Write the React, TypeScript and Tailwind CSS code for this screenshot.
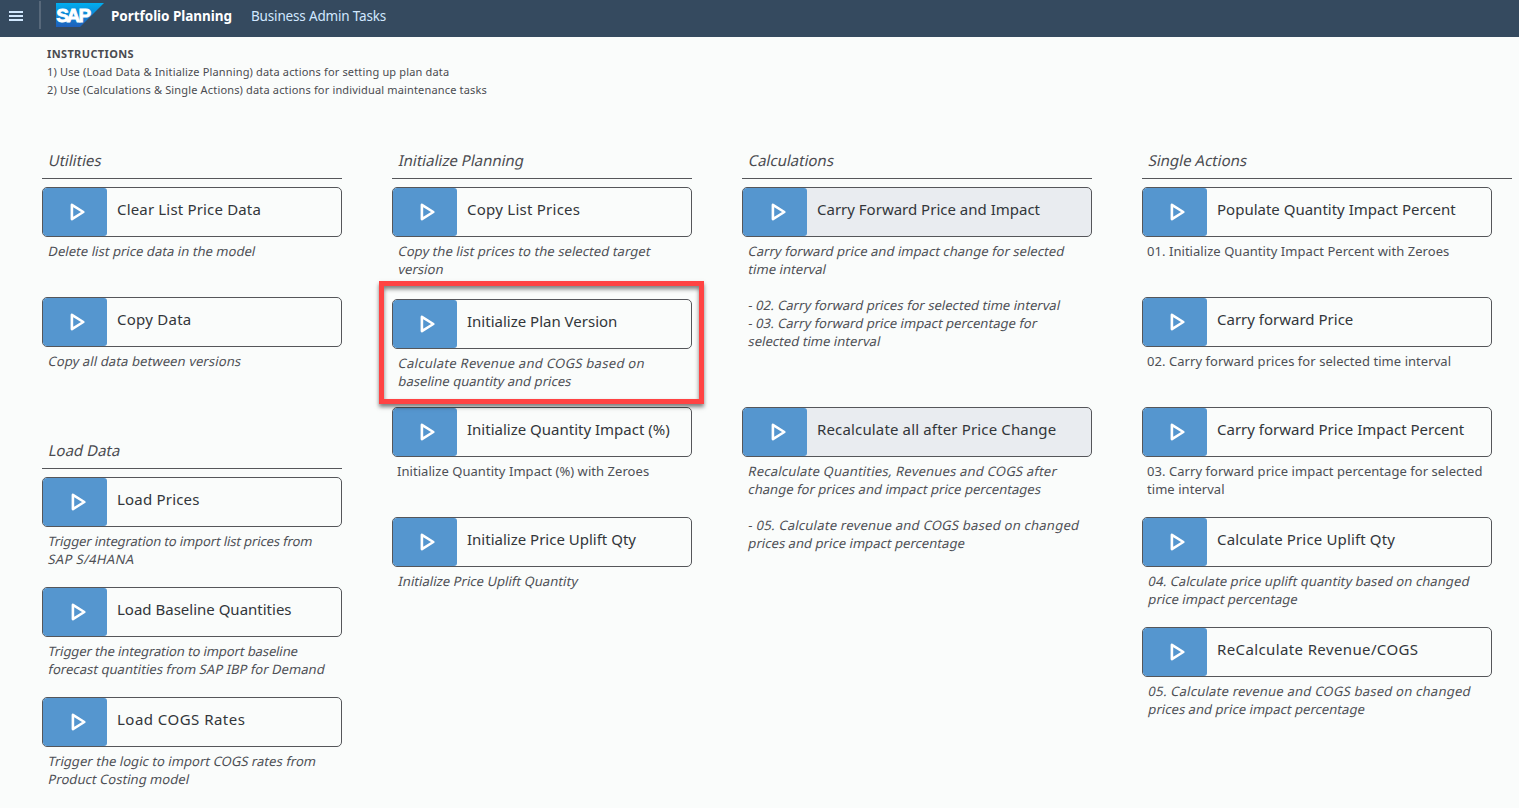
import React from "react";

type Line = string | { text: string; tracking: string };

type Item = {
  title: string;
  tracking?: string;
  lines: Line[];
  height: string;
  plain?: boolean;
  shaded?: boolean;
  highlight?: boolean;
};

function PlayIcon({ shifted }: { shifted?: boolean }) {
  return (
    <svg viewBox="0 0 18 20" className={`h-5 w-[18px] ${shifted ? "ml-[7px]" : "ml-[5px]"}`}>
      <path d="M2.9 2.9 L14.3 10 L2.9 17.1 Z" fill="none" stroke="#fff" strokeWidth="2.6" strokeLinejoin="round" />
    </svg>
  );
}

function Action({ item, shifted }: { item: Item; shifted?: boolean }) {
  return (
    <div className={`relative shrink-0 ${item.height}`}>
      <button
        className={`flex h-[50px] w-full overflow-hidden rounded-[5px] border border-[#55565a] text-left ${
          item.shaded ? "bg-[#e9ecf0]" : "bg-[#fafcfb]"
        }`}
      >
        <span className="flex h-full w-16 shrink-0 items-center justify-center rounded-[3px] bg-[#5596cf]">
          <PlayIcon shifted={shifted || item.shaded} />
        </span>
        <span
          className={`ml-[10px] mt-[11px] whitespace-nowrap text-[15px] leading-5 text-[#32363a] ${item.tracking ?? ""}`}
        >
          {item.title}
        </span>
      </button>
      <div className="mt-[5px] whitespace-nowrap pl-[5px] text-[13px] leading-[18px] text-[#4d4f55]">
        {item.lines.map((line, i) => {
          const text = typeof line === "string" ? line : line.text;
          const tracking = typeof line === "string" ? "tracking-[0.05px]" : line.tracking;
          return (
            <p key={i} className={`h-[18px] ${tracking} ${item.plain ? "" : "-skew-x-12 pl-[1.7px]"}`}>
              {text}
            </p>
          );
        })}
      </div>
      {item.highlight && (
        <div className="pointer-events-none absolute -left-[13px] -top-[18px] z-10 h-[123px] w-[325px] border-[5px] border-[#ff4343] shadow-[0_3px_4px_rgba(0,0,0,0.5),inset_0_3px_4px_rgba(0,0,0,0.5)]" />
      )}
    </div>
  );
}

function Group({ title, items, rule, shifted }: { title: string; items: Item[]; rule?: string; shifted?: boolean }) {
  return (
    <section className="flex flex-col">
      <h2 className="h-[28px] pl-[6.7px] text-[15px] leading-5 text-[#4a4b50]">
        <span className="inline-block -skew-x-12">{title}</span>
      </h2>
      <div className={`mb-2 h-px shrink-0 bg-[#55565a] ${rule ?? "w-full"}`} />
      {items.map((item) => (
        <Action key={item.title} item={item} shifted={shifted} />
      ))}
    </section>
  );
}

const utilities: Item[] = [
  {
    title: "Clear List Price Data",
    tracking: "tracking-[0.17px]",
    lines: ["Delete list price data in the model"],
    height: "h-[110px]",
  },
  {
    title: "Copy Data",
    tracking: "tracking-[0.25px]",
    lines: [{ text: "Copy all data between versions", tracking: "tracking-[0.12px]" }],
    height: "h-[143px]",
  },
];

const loadData: Item[] = [
  {
    title: "Load Prices",
    tracking: "tracking-[0.2px]",
    lines: [
      { text: "Trigger integration to import list prices from", tracking: "tracking-[-0.13px]" },
      { text: "SAP S/4HANA", tracking: "tracking-[0.34px]" },
    ],
    height: "h-[110px]",
  },
  {
    title: "Load Baseline Quantities",
    lines: [
      { text: "Trigger the integration to import baseline", tracking: "tracking-[-0.1px]" },
      "forecast quantities from SAP IBP for Demand",
    ],
    height: "h-[110px]",
  },
  {
    title: "Load COGS Rates",
    tracking: "tracking-[0.47px]",
    lines: ["Trigger the logic to import COGS rates from", "Product Costing model"],
    height: "h-[110px]",
  },
];

const planning: Item[] = [
  {
    title: "Copy List Prices",
    tracking: "tracking-[0.25px]",
    lines: [{ text: "Copy the list prices to the selected target", tracking: "tracking-[0.08px]" }, "version"],
    height: "h-[112px]",
  },
  {
    title: "Initialize Plan Version",
    lines: [
      { text: "Calculate Revenue and COGS based on", tracking: "tracking-[0.3px]" },
      "baseline quantity and prices",
    ],
    height: "h-[108px]",
    highlight: true,
  },
  {
    title: "Initialize Quantity Impact (%)",
    lines: ["Initialize Quantity Impact (%) with Zeroes"],
    height: "h-[110px]",
    plain: true,
  },
  { title: "Initialize Price Uplift Qty", lines: ["Initialize Price Uplift Quantity"], height: "h-[110px]" },
];

const calculations: Item[] = [
  {
    title: "Carry Forward Price and Impact",
    lines: [
      "Carry forward price and impact change for selected",
      "time interval",
      "",
      "- 02. Carry forward prices for selected time interval",
      "- 03. Carry forward price impact percentage for",
      "selected time interval",
    ],
    height: "h-[220px]",
    shaded: true,
  },
  {
    title: "Recalculate all after Price Change",
    tracking: "tracking-[0.15px]",
    lines: [
      { text: "Recalculate Quantities, Revenues and COGS after", tracking: "tracking-[0.21px]" },
      "change for prices and impact price percentages",
      "",
      { text: "- 05. Calculate revenue and COGS based on changed", tracking: "tracking-[0.25px]" },
      "prices and price impact percentage",
    ],
    height: "h-[220px]",
    shaded: true,
  },
];

const single: Item[] = [
  {
    title: "Populate Quantity Impact Percent",
    lines: ["01. Initialize Quantity Impact Percent with Zeroes"],
    height: "h-[110px]",
    plain: true,
  },
  {
    title: "Carry forward Price",
    lines: ["02. Carry forward prices for selected time interval"],
    height: "h-[110px]",
    plain: true,
  },
  {
    title: "Carry forward Price Impact Percent",
    lines: ["03. Carry forward price impact percentage for selected", "time interval"],
    height: "h-[110px]",
    plain: true,
  },
  {
    title: "Calculate Price Uplift Qty",
    tracking: "tracking-[0.15px]",
    lines: [
      { text: "04. Calculate price uplift quantity based on changed", tracking: "tracking-[0.09px]" },
      "price impact percentage",
    ],
    height: "h-[110px]",
  },
  {
    title: "ReCalculate Revenue/COGS",
    tracking: "tracking-[0.38px]",
    lines: [
      { text: "05. Calculate revenue and COGS based on changed", tracking: "tracking-[0.24px]" },
      "prices and price impact percentage",
    ],
    height: "h-[110px]",
  },
];

export default function App() {
  return (
    <div className="h-[808px] w-[1519px] overflow-hidden bg-[#fafcfb] font-['Noto_Sans','Open_Sans',sans-serif]">
      <header className="flex h-[37px] items-start bg-[#354a5f]">
        <svg viewBox="0 0 14 10" className="ml-[9px] mt-[11px] h-[10px] w-[14px]" fill="#d1e8ff">
          <rect width="14" height="2" />
          <rect y="4" width="14" height="2" />
          <rect y="8" width="14" height="2" />
        </svg>
        <div className="ml-4 mt-px h-7 w-[2px] bg-[#57687a]" />
        <svg viewBox="0 0 48 24" className="ml-[15px] mt-[3px] h-6 w-12">
          <defs>
            <linearGradient id="sap" x1="0" y1="0" x2="0" y2="1">
              <stop offset="0" stopColor="#00aeef" />
              <stop offset="1" stopColor="#1f5fbb" />
            </linearGradient>
          </defs>
          <path d="M0 0H48L24 24H0Z" fill="url(#sap)" />
          <g fontFamily="Liberation Sans" fontWeight="700" fontSize="19" fill="#fff" stroke="#fff" strokeWidth="0.8">
            <text x="0.2" y="18.8">S</text>
            <text x="10.6" y="18.8">A</text>
            <text x="22.6" y="18.8">P</text>
          </g>
        </svg>
        <span className="ml-[7px] mt-[6px] w-[121px] whitespace-nowrap text-[13.5px] font-bold leading-5 tracking-[-0.04px] text-white">
          Portfolio Planning
        </span>
        <span className="ml-[19px] mt-[6px] whitespace-nowrap text-[13.5px] leading-5 tracking-[-0.17px] text-[#d1e8ff]">
          Business Admin Tasks
        </span>
      </header>
      <div className="h-[113px] whitespace-nowrap pl-[47px] pt-[8px] text-[11px] leading-[18px] tracking-[0.16px] text-[#4a4b50]">
        <p className="font-bold tracking-[0.37px]">INSTRUCTIONS</p>
        <p>1) Use (Load Data &amp; Initialize Planning) data actions for setting up plan data</p>
        <p>2) Use (Calculations &amp; Single Actions) data actions for individual maintenance tasks</p>
      </div>
      <main className="grid grid-cols-[300px_300px_350px_350px] items-start gap-x-[50px] pl-[42px]">
        <div className="flex flex-col">
          <Group title="Utilities" items={utilities} />
          <Group title="Load Data" items={loadData} shifted />
        </div>
        <Group title="Initialize Planning" items={planning} />
        <Group title="Calculations" items={calculations} />
        <Group title="Single Actions" items={single} rule="w-[370px]" />
      </main>
    </div>
  );
}
